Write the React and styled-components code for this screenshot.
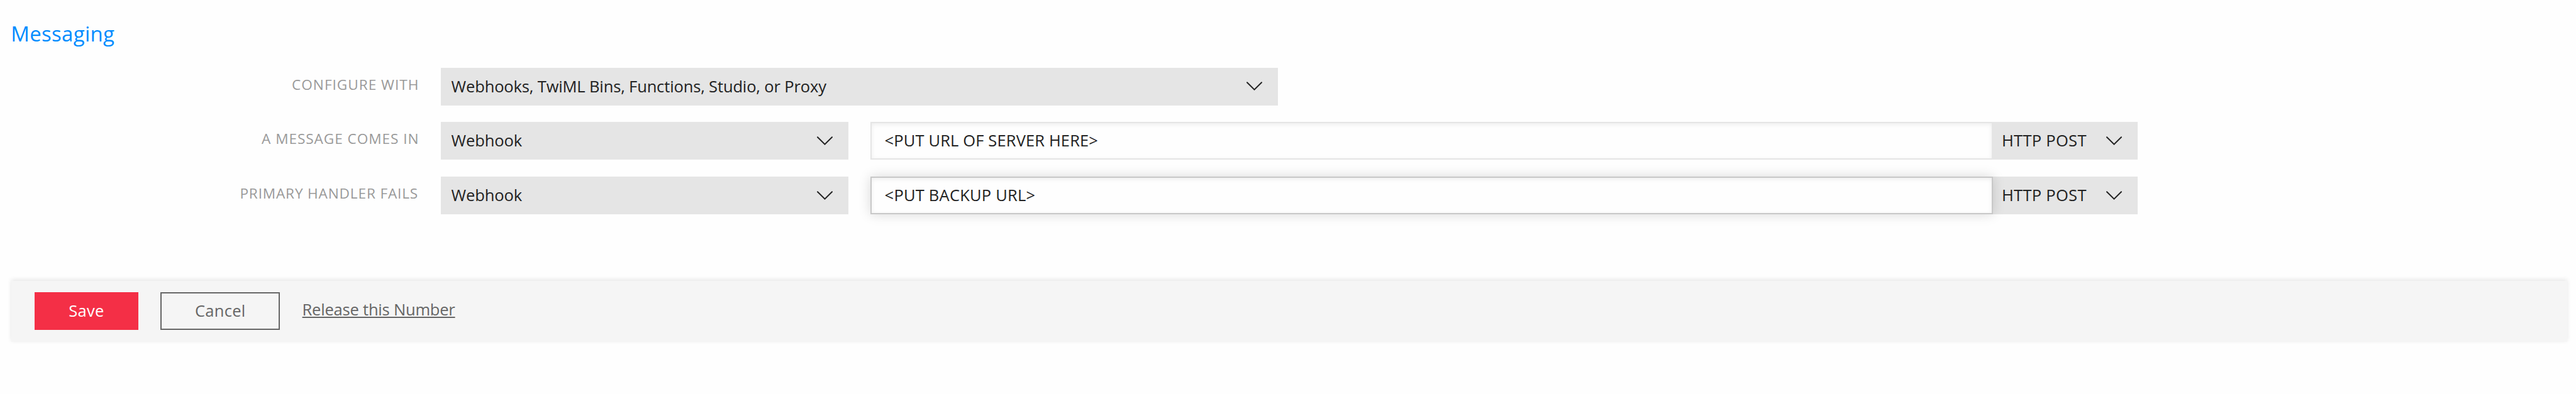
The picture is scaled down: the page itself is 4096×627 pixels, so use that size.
import React from "react";
import styled, { createGlobalStyle } from "styled-components";

const GlobalStyle = createGlobalStyle`
  body {
    margin: 0;
    background: #fefefe;
    font-family: "Open Sans", "Noto Sans", sans-serif;
    font-size: 25.5px;
    color: #222;
  }
  *, *::before, *::after { box-sizing: border-box; }
  input, button { font: inherit; color: inherit; margin: 0; }
`;

const Page = styled.main`
  height: 627px;
  overflow: hidden;
`;

const Heading = styled.h2`
  margin: 0;
  padding-left: 17.2px;
  height: 107.8px;
  line-height: 108.8px;
  font-size: 33px;
  font-weight: 400;
  letter-spacing: 0.3px;
  color: #008cff;
`;

const Form = styled.div`
  display: flex;
  flex-direction: column;
  gap: 26.5px;
`;

const Row = styled.div`
  display: flex;
  height: 60.1px;
`;

const Label = styled.label`
  width: 700.6px;
  padding-right: ${(p) => p.$inset || 34.2}px;
  text-align: right;
  font-size: 22.6px;
  line-height: 53.6px;
  letter-spacing: ${(p) => p.$track}px;
  text-transform: uppercase;
  color: #999;
`;

const SelectBox = styled.div`
  display: flex;
  align-items: center;
  justify-content: space-between;
  width: ${(p) => p.$width}px;
  padding: 0 25px 0 ${(p) => p.$pad || 17}px;
  background: #e5e5e5;
`;

const Value = styled.span`
  line-height: 58px;
  padding-bottom: 2px;
  letter-spacing: ${(p) => p.$track}px;
  white-space: nowrap;
`;

const ChevronIcon = styled.svg`
  display: block;
  width: 25px;
  height: 14px;
  margin-bottom: 1px;
  fill: none;
  stroke: #222;
  stroke-width: 2;
  stroke-linecap: round;
`;

const UrlGroup = styled.div`
  display: flex;
  margin-left: 35.3px;
`;

const UrlInput = styled.input`
  position: relative;
  z-index: ${(p) => (p.$focused ? 1 : 0)};
  width: 1784.6px;
  height: 60.1px;
  padding: 0 20px 2px 20.2px;
  border: 2px solid ${(p) => (p.$focused ? "#c8c8c8" : "#e5e5e5")};
  border-radius: 0;
  outline: none;
  background: #fefefe;
  letter-spacing: ${(p) => p.$track}px;
  box-shadow: inset 0 2px 7px rgba(0, 0, 0, 0.07)
    ${(p) => p.$focused && ", 0 0 18px rgba(0, 0, 0, 0.15)"};
`;

const Footer = styled.footer`
  display: flex;
  align-items: flex-start;
  height: 97.2px;
  margin: 105.9px 14.1px 0 17.7px;
  padding: 17.7px 37.1px;
  background: #f5f5f5;
  box-shadow: 0 -2px 7px rgba(0, 0, 0, 0.1);
`;

const Button = styled.button`
  width: ${(p) => p.$width}px;
  height: 60.1px;
  margin-right: 35.3px;
  padding: 0 0 2px;
  border: 2px solid ${(p) => (p.$primary ? "#f42f46" : "#666")};
  background: ${(p) => (p.$primary ? "#f42f46" : "transparent")};
  color: ${(p) => (p.$primary ? "#fff" : "#666")};
  font-weight: ${(p) => (p.$primary ? 500 : 400)};
  letter-spacing: 0.3px;
`;

const ReleaseLink = styled.a`
  line-height: 54.4px;
  letter-spacing: -0.2px;
  color: #666;
  text-decoration: underline;
  text-decoration-thickness: 2px;
  text-underline-offset: 2px;
  text-decoration-skip-ink: none;
`;

const Chevron = () => (
  <ChevronIcon viewBox="0 0 25 14">
    <path d="M1 1.2 12.5 12.6 24 1.2" />
  </ChevronIcon>
);

const Select = ({ children, width, track, pad }) => (
  <SelectBox $width={width} $pad={pad}>
    <Value $track={track}>{children}</Value>
    <Chevron />
  </SelectBox>
);

const HandlerRow = ({ label, labelTrack, labelInset, url, urlTrack, focused }) => (
  <Row>
    <Label $track={labelTrack} $inset={labelInset}>{label}</Label>
    <Select width={648.5} track={-0.1}>Webhook</Select>
    <UrlGroup>
      <UrlInput defaultValue={url} $track={urlTrack} $focused={focused} />
      <Select width={229.7} track={0.3} pad={14}>HTTP POST</Select>
    </UrlGroup>
  </Row>
);

export default function App() {
  return (
    <>
      <GlobalStyle />
      <Page>
        <Heading>Messaging</Heading>
        <Form>
          <Row>
            <Label $track={1}>Configure with</Label>
            <Select width={1331.5} track={-0.14}>
              Webhooks, TwiML Bins, Functions, Studio, or Proxy
            </Select>
          </Row>
          <HandlerRow
            label="A message comes in"
            labelTrack={0.95}
            url="<PUT URL OF SERVER HERE>"
            urlTrack={0.14}
          />
          <HandlerRow
            label="Primary handler fails"
            labelTrack={0.85}
            labelInset={35.5}
            url="<PUT BACKUP URL>"
            urlTrack={0.22}
            focused
          />
        </Form>
        <Footer>
          <Button $primary $width={165.2}>Save</Button>
          <Button $width={190}>Cancel</Button>
          <ReleaseLink>Release this Number</ReleaseLink>
        </Footer>
      </Page>
    </>
  );
}
